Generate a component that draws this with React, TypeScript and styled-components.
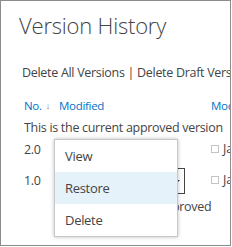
import React from 'react';
import styled, { createGlobalStyle } from 'styled-components';

const GlobalStyle = createGlobalStyle`
  html, body {
    margin: 0;
    padding: 0;
    background: #ffffff;
  }
  body {
    font-family: 'Open Sans', 'Noto Sans', 'Liberation Sans', sans-serif;
    color: #444444;
  }
`;

const Frame = styled.div`
  position: relative;
  box-sizing: border-box;
  width: 231px;
  height: 246px;
  border: 1px solid #8c8c8c;
  overflow: hidden;
  background: #ffffff;
`;

const Title = styled.h1`
  margin: 0;
  padding: 9px 0 0 18px;
  font-size: 22px;
  font-weight: 300;
  line-height: 30px;
  color: #444444;
  letter-spacing: -0.2px;
`;

const Toolbar = styled.div`
  margin-top: 24px;
  padding-left: 21px;
  font-size: 12.5px;
  letter-spacing: -0.3px;
  line-height: 18px;
  white-space: nowrap;
  color: #444444;
`;

const Table = styled.div`
  margin-top: 16px;
  padding-left: 23px;
`;

const Row = styled.div<{ $height: number }>`
  display: grid;
  grid-template-columns: 35px 152px 1fr;
  height: ${({ $height }) => $height}px;
  align-items: start;
  white-space: nowrap;
`;

const HeaderCell = styled.span`
  font-size: 11.5px;
  letter-spacing: -0.3px;
  line-height: 16px;
  color: #0072c6;
  display: inline-flex;
  align-items: center;
  gap: 4px;
`;

const SortArrow = styled.span`
  color: #777777;
  font-size: 9px;
`;

const Notice = styled.div`
  font-size: 12.5px;
  letter-spacing: -0.3px;
  line-height: 20px;
  height: 23px;
  white-space: nowrap;
`;

const Cell = styled.span`
  font-size: 12.5px;
  letter-spacing: -0.3px;
  line-height: 18px;
`;

const VersionBox = styled.div`
  position: relative;
  box-sizing: border-box;
  margin-top: -4px;
  margin-left: 80px;
  width: 46px;
  height: 26px;
  border: 1px solid #444444;
  border-left: none;
  display: flex;
  align-items: center;
  justify-content: flex-end;
  padding-right: 4px;
`;

const Caret = styled.span`
  width: 0;
  height: 0;
  border-left: 3px solid transparent;
  border-right: 3px solid transparent;
  border-top: 3px solid #333333;
`;

const Status = styled.div`
  margin-left: 98px;
  margin-top: 4px;
  font-size: 12.5px;
  letter-spacing: -0.3px;
  line-height: 18px;
`;

const PersonCell = styled.span`
  display: inline-flex;
  align-items: center;
  gap: 4px;
  font-size: 12.5px;
  line-height: 18px;
  margin-top: -1px;
`;

const Checkbox = styled.span`
  box-sizing: border-box;
  width: 8px;
  height: 8px;
  border: 1px solid #c4c4c4;
  background: #ffffff;
`;

const Menu = styled.ul`
  position: absolute;
  left: 53px;
  top: 138px;
  width: 122px;
  margin: 0;
  padding: 0;
  list-style: none;
  background: #ffffff;
  border: 1px solid #c8c8c8;
  box-shadow: 0 0 4px rgba(0, 0, 0, 0.25);
`;

const MenuItem = styled.li<{ $active?: boolean }>`
  height: 32px;
  padding-left: 10px;
  display: flex;
  align-items: center;
  font-size: 13px;
  letter-spacing: -0.3px;
  color: #444444;
  background: ${({ $active }) => ($active ? '#e6f2fa' : '#ffffff')};
`;

const App: React.FC = () => {
  return (
    <>
      <GlobalStyle />
      <Frame>
        <Title>Version History</Title>
        <Toolbar>Delete All Versions | Delete Draft Versions</Toolbar>
        <Table>
          <Row $height={20}>
            <HeaderCell>
              No. <SortArrow>↓</SortArrow>
            </HeaderCell>
            <HeaderCell>Modified</HeaderCell>
            <HeaderCell>Modified By</HeaderCell>
          </Row>
          <Notice>This is the current approved version</Notice>
          <Row $height={31}>
            <Cell>2.0</Cell>
            <Cell />
            <PersonCell>
              <Checkbox />
              Jane
            </PersonCell>
          </Row>
          <Row $height={50}>
            <Cell>1.0</Cell>
            <div>
              <VersionBox>
                <Caret />
              </VersionBox>
              <Status>Approved</Status>
            </div>
            <PersonCell>
              <Checkbox />
              Jane
            </PersonCell>
          </Row>
        </Table>
        <Menu>
          <MenuItem>View</MenuItem>
          <MenuItem $active>Restore</MenuItem>
          <MenuItem>Delete</MenuItem>
        </Menu>
      </Frame>
    </>
  );
};

export default App;
